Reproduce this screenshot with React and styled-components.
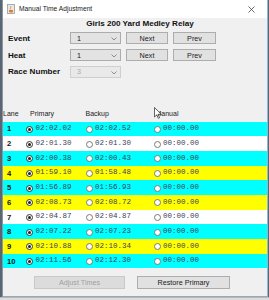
import React from "react";
import styled, { createGlobalStyle } from "styled-components";

const Global = createGlobalStyle`
  html, body { margin: 0; padding: 0; }
  body { font-family: "Liberation Sans", Arial, sans-serif; background: #5a6470; }
  * { box-sizing: border-box; }
`;

const Page = styled.div`
  width: 269px;
  height: 300px;
  display: flex;
  flex-direction: column;
  background: #5b6673;
  overflow: hidden;
  position: relative;
`;

const Window = styled.div`
  margin-left: 2px;
  width: 266px;
  height: 297px;
  display: flex;
  flex-direction: column;
  border-left: 1px solid #8a96a4;
  border-right: 1px solid #8fb6dc;
  border-bottom: 1px solid #9aa6b2;
  background: #f0f0f0;
`;

const BottomStrip = styled.div`
  flex: 1;
  background: #dcdcdc;
  border-top: 1px solid #b8b8b8;
`;

const TitleBar = styled.div`
  height: 18px;
  background: #ffffff;
  display: flex;
  align-items: center;
  padding-left: 4px;
  gap: 4px;
  flex-shrink: 0;
`;

const TitleText = styled.span`
  font-size: 6.7px;
  color: #1a1a1a;
  line-height: 1;
  margin-top: 1px;
`;

const CloseBox = styled.div`
  margin-left: auto;
  width: 24px;
  height: 18px;
  display: flex;
  align-items: center;
  justify-content: center;
  margin-right: 4px;
`;

const Body = styled.div`
  flex: 1;
  display: flex;
  flex-direction: column;
  background: #f0f0f0;
`;

const Heading = styled.div`
  font-weight: bold;
  font-size: 8.1px;
  line-height: 10px;
  text-align: center;
  padding-top: 1px;
  padding-left: 10px;
  color: #111;
`;

const Form = styled.div`
  margin-top: 3px;
  padding-left: 5px;
  display: grid;
  grid-template-columns: 57px 51px 42px 43px;
  grid-auto-rows: 12.5px;
  column-gap: 5px;
  row-gap: 4.3px;
  align-items: center;
`;

const Label = styled.div`
  font-weight: bold;
  font-size: 8.1px;
  color: #111;
`;

const Combo = styled.div`
  height: 12px;
  border: 1px solid ${(p) => (p.disabled ? "#cfcfcf" : "#acacac")};
  background: ${(p) => (p.disabled ? "#e9e9e9" : "#e3e3e3")};
  display: flex;
  align-items: center;
  padding-left: 6px;
  font-size: 7.2px;
  color: ${(p) => (p.disabled ? "#a8a8a8" : "#111")};
  position: relative;
`;

const ComboArrow = styled.svg`
  position: absolute;
  right: 3px;
  top: 4px;
`;

const Button = styled.div`
  height: ${(p) => p.h || 12}px;
  border: 1px solid ${(p) => (p.disabled ? "#c9c9c9" : "#adadad")};
  background: ${(p) => (p.disabled ? "#dcdcdc" : "#e1e1e1")};
  color: ${(p) => (p.disabled ? "#a0a0a0" : "#1a1a1a")};
  font-size: 7.2px;
  display: flex;
  align-items: center;
  justify-content: center;
  width: ${(p) => (p.w ? `${p.w}px` : "auto")};
`;

const Table = styled.div`
  margin-top: 27px;
  display: flex;
  flex-direction: column;
`;

const HeaderRow = styled.div`
  height: 16.5px;
  display: grid;
  grid-template-columns: 23px 59.5px 68px 1fr;
  align-items: center;
  font-size: 7px;
  color: #222;
`;

const HeadCell = styled.div`
  padding-left: ${(p) => p.pl}px;
`;

const Row = styled.div`
  height: 14.7px;
  display: grid;
  grid-template-columns: 23px 59.5px 68px 1fr;
  align-items: center;
  background: ${(p) => p.bg};
`;

const LaneCell = styled.div`
  padding-left: 4px;
  font-weight: bold;
  font-size: 7.6px;
  color: #111;
`;

const OptCell = styled.div`
  display: flex;
  align-items: center;
  gap: 2.5px;
`;

const Radio = styled.span`
  width: 7px;
  height: 7px;
  border-radius: 50%;
  border: 1px solid ${(p) => (p.checked ? "#333" : "#7a7a7a")};
  background: #fff;
  display: flex;
  align-items: center;
  justify-content: center;
  flex-shrink: 0;
  margin-top: 1px;
  &::after {
    content: "";
    width: 3px;
    height: 3px;
    border-radius: 50%;
    background: ${(p) => (p.checked ? "#222" : "transparent")};
  }
`;

const Time = styled.span`
  font-family: "Liberation Mono", "Courier New", monospace;
  font-size: 7.5px;
  color: #3c4258;
  line-height: 1;
`;

const Footer = styled.div`
  margin-top: 8px;
  padding-left: 31px;
  display: flex;
  gap: 12px;
`;

const Cursor = styled.svg`
  position: absolute;
  left: 154px;
  top: 107px;
`;

const rows = [
  { lane: 1, bg: "#00ffff", p: "02:02.02", b: "02:02.52" },
  { lane: 2, bg: "#ffffff", p: "02:01.30", b: "02:01.30" },
  { lane: 3, bg: "#00ffff", p: "02:00.38", b: "02:00.43" },
  { lane: 4, bg: "#ffff00", p: "01:59.10", b: "01:58.48" },
  { lane: 5, bg: "#00ffff", p: "01:56.89", b: "01:56.93" },
  { lane: 6, bg: "#ffff00", p: "02:08.73", b: "02:08.72" },
  { lane: 7, bg: "#ffffff", p: "02:04.87", b: "02:04.87" },
  { lane: 8, bg: "#00ffff", p: "02:07.22", b: "02:07.23" },
  { lane: 9, bg: "#ffff00", p: "02:10.88", b: "02:10.34" },
  { lane: 10, bg: "#00ffff", p: "02:11.56", b: "02:12.30" },
];

const Chevron = () => (
  <ComboArrow width="6" height="4" viewBox="0 0 6 4">
    <path d="M0.5 0.5 L3 3 L5.5 0.5" fill="none" stroke="#777" strokeWidth="0.8" />
  </ComboArrow>
);

const AppIcon = () => (
  <svg width="8" height="10" viewBox="0 0 8 10">
    <rect x="0.5" y="0.5" width="7" height="9" fill="#e8e8e8" stroke="#9a9a9a" strokeWidth="0.8" />
    <path d="M2 6 h4 v1.5 a1 1 0 0 1 -1 1 h-2 a1 1 0 0 1 -1 -1 z" fill="#d9822b" />
    <path d="M3.5 2 q1 1 0 2 q-1 1 0.5 1.5" fill="none" stroke="#d9822b" strokeWidth="0.7" />
  </svg>
);

export default function App() {
  return (
    <>
      <Global />
      <Page>
        <Window>
          <TitleBar>
            <AppIcon />
            <TitleText>Manual Time Adjustment</TitleText>
            <CloseBox>
              <svg width="7" height="7" viewBox="0 0 7 7">
                <path d="M0.5 0.5 L6.5 6.5 M6.5 0.5 L0.5 6.5" stroke="#444" strokeWidth="0.8" />
              </svg>
            </CloseBox>
          </TitleBar>
          <Body>
            <Heading>Girls 200 Yard Medley Relay</Heading>
            <Form>
              <Label>Event</Label>
              <Combo>1<Chevron /></Combo>
              <Button>Next</Button>
              <Button>Prev</Button>
              <Label>Heat</Label>
              <Combo>1<Chevron /></Combo>
              <Button>Next</Button>
              <Button>Prev</Button>
              <Label>Race Number</Label>
              <Combo disabled>3<Chevron /></Combo>
            </Form>
            <Table>
              <HeaderRow>
                <HeadCell pl={-1}>Lane</HeadCell>
                <HeadCell pl={4}>Primary</HeadCell>
                <HeadCell pl={0}>Backup</HeadCell>
                <HeadCell pl={2}>Manual</HeadCell>
              </HeaderRow>
              {rows.map((r) => (
                <Row key={r.lane} bg={r.bg}>
                  <LaneCell>{r.lane}</LaneCell>
                  <OptCell>
                    <Radio checked />
                    <Time>{r.p}</Time>
                  </OptCell>
                  <OptCell>
                    <Radio />
                    <Time>{r.b}</Time>
                  </OptCell>
                  <OptCell>
                    <Radio />
                    <Time>00:00.00</Time>
                  </OptCell>
                </Row>
              ))}
            </Table>
            <Footer>
              <Button disabled w={91} h={13}>Adjust Times</Button>
              <Button w={93} h={13}>Restore Primary</Button>
            </Footer>
          </Body>
        </Window>
        <BottomStrip />
        <Cursor width="8" height="12" viewBox="0 0 8 12">
          <path d="M0.5 0.5 L0.5 10 L2.8 7.8 L4.3 11.3 L5.6 10.7 L4.1 7.3 L7.2 7.3 Z" fill="#fff" stroke="#222" strokeWidth="0.7" />
        </Cursor>
      </Page>
    </>
  );
}
